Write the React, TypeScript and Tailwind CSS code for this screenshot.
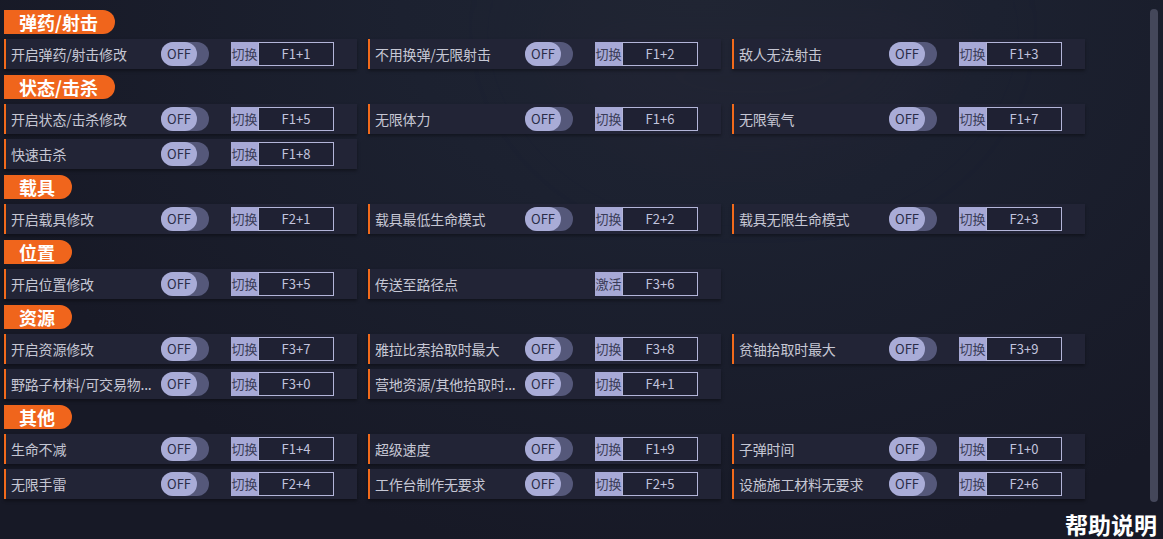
type Item = {
  label: string;
  key: string;
  toggle?: boolean;
  action?: string;
};

type Section = {
  title: string;
  items: Item[];
};

const sections: Section[] = [
  {
    title: '弹药/射击',
    items: [
      { label: '开启弹药/射击修改', key: 'F1+1' },
      { label: '不用换弹/无限射击', key: 'F1+2' },
      { label: '敌人无法射击', key: 'F1+3' },
    ],
  },
  {
    title: '状态/击杀',
    items: [
      { label: '开启状态/击杀修改', key: 'F1+5' },
      { label: '无限体力', key: 'F1+6' },
      { label: '无限氧气', key: 'F1+7' },
      { label: '快速击杀', key: 'F1+8' },
    ],
  },
  {
    title: '载具',
    items: [
      { label: '开启载具修改', key: 'F2+1' },
      { label: '载具最低生命模式', key: 'F2+2' },
      { label: '载具无限生命模式', key: 'F2+3' },
    ],
  },
  {
    title: '位置',
    items: [
      { label: '开启位置修改', key: 'F3+5' },
      { label: '传送至路径点', key: 'F3+6', toggle: false, action: '激活' },
    ],
  },
  {
    title: '资源',
    items: [
      { label: '开启资源修改', key: 'F3+7' },
      { label: '雅拉比索拾取时最大', key: 'F3+8' },
      { label: '贫铀拾取时最大', key: 'F3+9' },
      { label: '野路子材料/可交易物...', key: 'F3+0' },
      { label: '营地资源/其他拾取时...', key: 'F4+1' },
    ],
  },
  {
    title: '其他',
    items: [
      { label: '生命不减', key: 'F1+4' },
      { label: '超级速度', key: 'F1+9' },
      { label: '子弹时间', key: 'F1+0' },
      { label: '无限手雷', key: 'F2+4' },
      { label: '工作台制作无要求', key: 'F2+5' },
      { label: '设施施工材料无要求', key: 'F2+6' },
    ],
  },
];

function Toggle() {
  return (
    <div className="relative h-6 w-12 shrink-0 rounded-full bg-[#55587a]">
      <div className="absolute left-0 top-0 flex h-6 w-9 items-center justify-center rounded-full bg-[#a9acd7] text-[13px] text-[#2b2d48]">
        OFF
      </div>
    </div>
  );
}

function Row({ item }: { item: Item }) {
  const hasToggle = item.toggle !== false;
  return (
    <div className="flex h-[30px] items-center border-l-2 border-[#f26a1b] bg-[#222436] shadow-[0_2px_3px_rgba(0,0,0,0.35)]">
      <div className="w-[155px] shrink-0 whitespace-nowrap pl-[5px] text-[14px] tracking-[-0.2px] text-[#c6c7d4]">
        {item.label}
      </div>
      {hasToggle ? <Toggle /> : <div className="w-12 shrink-0" />}
      <div className="ml-[22px] flex h-6 items-stretch">
        <div className="flex w-[27px] items-center justify-center bg-[#a7a9d6] text-[13px] text-[#3a3c58]">
          {item.action ?? '切换'}
        </div>
        <div className="flex w-[76px] items-center justify-center border border-[#b3b5d9] bg-[#1f2133] text-[13px] text-[#c2c4de]">
          {item.key}
        </div>
      </div>
    </div>
  );
}

export default function App() {
  return (
    <div
      className="relative h-[539px] w-[1163px] overflow-hidden bg-[#171926] bg-[radial-gradient(ellipse_at_60%_0%,#1f2533_0%,#1c2130_30%,#171926_75%)]"
      style={{ fontFamily: '"Noto Sans CJK SC", "Noto Sans", sans-serif' }}
    >
      <div className="absolute right-[200px] top-0 h-[160px] w-[420px] rounded-b-full bg-[#252535] opacity-40 blur-2xl" />
      <div className="relative flex flex-col gap-[5px] pl-1 pt-[9px]">
        {sections.map((section) => (
          <div key={section.title} className="flex flex-col gap-[5px]">
            <div className="mt-px flex">
              <div className="flex h-6 items-center rounded-l-[8px] rounded-r-full bg-[#f0651c] pl-[15px] pr-[17px] text-[18px] font-bold leading-none text-white">
                {section.title}
              </div>
            </div>
            <div className="grid grid-cols-[353px_353px_353px] gap-x-[11px] gap-y-[5px]">
              {section.items.map((item) => (
                <Row key={item.key} item={item} />
              ))}
            </div>
          </div>
        ))}
      </div>

      <div className="absolute right-[5px] top-[9px] h-[493px] w-2 rounded-full bg-[#44475a]" />

      <div className="absolute bottom-0 right-[6px] h-[30px] text-[23px] font-bold leading-[30px] text-white">
        帮助说明
      </div>
    </div>
  );
}
